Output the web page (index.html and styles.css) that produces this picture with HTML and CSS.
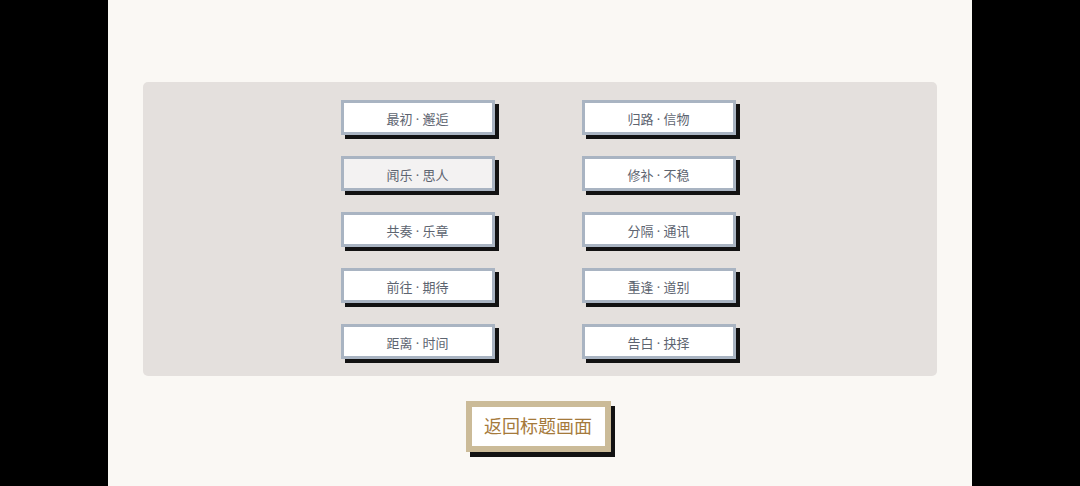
FILE: index.html
```html
<!doctype html>
<html>
  <head>
    <meta charset="utf-8">
    <link rel="stylesheet" href="styles.css">
    <title>章节选择</title>
  </head>
  <body>
    <div class="screen">
      <div class="panel">
        <div class="chapters">
          <button class="chapter">最初 · 邂逅</button>
          <button class="chapter">归路 · 信物</button>
          <button class="chapter active">闻乐 · 思人</button>
          <button class="chapter">修补 · 不稳</button>
          <button class="chapter">共奏 · 乐章</button>
          <button class="chapter">分隔 · 通讯</button>
          <button class="chapter">前往 · 期待</button>
          <button class="chapter">重逢 · 道别</button>
          <button class="chapter">距离 · 时间</button>
          <button class="chapter">告白 · 抉择</button>
        </div>
      </div>
      <div class="footer">
        <button class="back">返回标题画面</button>
      </div>
    </div>
  </body>
</html>
```

FILE: styles.css
```css
html, body {
  margin: 0;
  background: #000;
}
.screen {
  width: 864px;
  height: 486px;
  margin: 0 auto;
  background: #faf8f4;
  padding-top: 82px;
  box-sizing: border-box;
  font-family: "Noto Sans", "Noto Sans CJK SC", sans-serif;
}
.panel {
  margin: 0 35px;
  height: 294px;
  background: #e4e0dd;
  border-radius: 5px;
  padding-top: 18px;
  box-sizing: border-box;
}
.chapters {
  display: grid;
  grid-template-columns: 154px 154px;
  grid-auto-rows: 35px;
  column-gap: 87px;
  row-gap: 21px;
  justify-content: center;
  padding-right: 4px;
}
.chapter {
  font-family: inherit;
  font-size: 13px;
  color: #5d6470;
  background: #fff;
  border: 3px solid #a9b4c2;
  box-shadow: 4px 4px 0 #121212;
  padding: 1px 0 0;
  cursor: pointer;
}
.chapter.active {
  background: #f3f2f2;
}
.footer {
  display: flex;
  justify-content: center;
  padding-top: 25px;
  padding-right: 4px;
}
.back {
  font-family: inherit;
  width: 145px;
  height: 51px;
  font-size: 18px;
  line-height: 1;
  color: #a57a3b;
  background: #fff;
  border: 6px solid #cbbb98;
  box-shadow: 4px 5px 0 #121212;
  padding: 0 0 2px;
  cursor: pointer;
}
```
